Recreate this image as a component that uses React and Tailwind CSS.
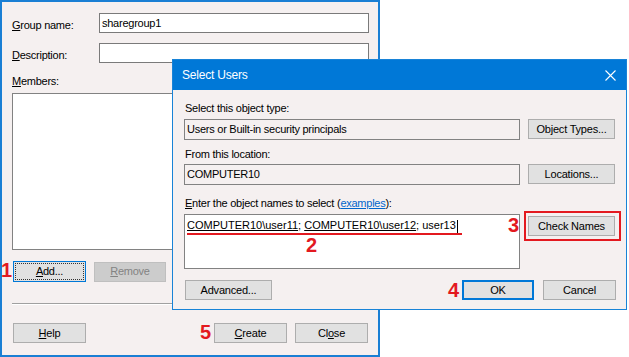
import React from "react";

const font = { fontFamily: '"Liberation Sans", Arial, sans-serif' };

function Btn({ children, className = "" }) {
  return (
    <div
      className={
        "flex items-center justify-center bg-[#e1e1e1] border border-[#adadad] text-black text-[11px] tracking-[-0.2px] leading-none " +
        className
      }
    >
      {children}
    </div>
  );
}

function Red({ children, className }) {
  return (
    <div
      className={
        "absolute text-[20px] font-bold leading-none text-[#e3191f] " + className
      }
    >
      {children}
    </div>
  );
}

export default function App() {
  return (
    <div
      className="relative w-[629px] h-[357px] bg-white overflow-hidden text-[11px] tracking-[-0.25px] text-black"
      style={font}
    >
      {/* Background window: New Group */}
      <div className="w-[380px] h-[357px] border-2 border-[#1a7fd4] bg-[#f5f0f0] pl-[10px] flex flex-col">
        <div className="mt-[11px] flex items-center h-[20px]">
          <div className="w-[87px] leading-[14px] pt-[3px]">
            <span className="underline">G</span>roup name:
          </div>
          <div className="w-[270px] h-[20px] border border-[#7a7a7a] bg-white pl-[2px] flex items-center">
            sharegroup1
          </div>
        </div>
        <div className="mt-[10px] flex items-center h-[20px]">
          <div className="w-[87px] leading-[14px] pt-[3px]">
            <span className="underline">D</span>escription:
          </div>
          <div className="w-[270px] h-[20px] border border-[#7a7a7a] bg-white" />
        </div>
        <div className="mt-[11px] leading-[14px]">
          <span className="underline">M</span>embers:
        </div>
        <div className="mt-[5px] w-[357px] h-[157px] border border-[#828282] bg-white" />
        <div className="mt-[11px] flex items-center h-[21px]">
          <div className="ml-[1px] w-[73px] h-[21px] border border-[#0078d7] bg-[#e1e1e1] p-[1px]">
            <div className="w-full h-full border border-dotted border-[#333] flex items-center justify-center leading-none">
              <span>
                <span className="underline">A</span>dd...
              </span>
            </div>
          </div>
          <div className="ml-[8px] w-[72px] h-[20px] bg-[#cccccc] border border-[#bfbfbf] text-[#838383] flex items-center justify-center leading-none">
            <span>
              <span className="underline">R</span>emove
            </span>
          </div>
        </div>
        <div className="mt-[21px] w-[357px] h-[2px] border-t border-[#a0a0a0] border-b border-b-white" />
        <div className="mt-[18px] flex items-center h-[20px]">
          <Btn className="ml-[1px] w-[73px] h-[20px]">
            <span>
              <span className="underline">H</span>elp
            </span>
          </Btn>
          <Btn className="ml-[128px] w-[73px] h-[20px]">
            <span>
              <span className="underline">C</span>reate
            </span>
          </Btn>
          <Btn className="ml-[8px] w-[73px] h-[20px]">
            <span>
              Cl<span className="underline">o</span>se
            </span>
          </Btn>
        </div>
      </div>

      {/* Select Users dialog */}
      <div className="absolute left-[172px] top-[59px] w-[455px] h-[251px] border border-[#1883d7] bg-[#f5f0f0] flex flex-col">
        <div className="h-[30px] bg-[#0078d7] flex items-center justify-between pl-[9px] pr-[9px] text-white">
          <span className="text-[12px] tracking-[-0.2px]">Select Users</span>
          <svg width="11" height="11" viewBox="0 0 11 11" className="mr-[1px]">
            <path d="M0.5 0.5 L10.5 10.5 M10.5 0.5 L0.5 10.5" stroke="white" strokeWidth="1.1" fill="none" />
          </svg>
        </div>
        <div className="pl-[11px] flex flex-col">
          <div className="mt-[11px] pl-[1px] leading-[14px]">Select this object type:</div>
          <div className="mt-[4px] flex items-start">
            <div className="w-[336px] h-[21px] border border-[#828282] pl-[2px] flex items-center">
              Users or Built-in security principals
            </div>
            <Btn className="ml-[8px] w-[87px] h-[20px]">Object Types...</Btn>
          </div>
          <div className="mt-[7px] pl-[1px] leading-[14px]">From this location:</div>
          <div className="mt-[3px] flex items-start">
            <div className="w-[336px] h-[21px] border border-[#828282] pl-[2px] flex items-center">
              COMPUTER10
            </div>
            <Btn className="ml-[8px] w-[87px] h-[20px]">Locations...</Btn>
          </div>
          <div className="mt-[11px] pl-[1px] leading-[14px]">
            <span className="underline">E</span>nter the object names to select (
            <span className="text-[#0066cc] underline">examples</span>):
          </div>
          <div className="mt-[4px] flex items-start">
            <div className="w-[336px] h-[55px] border border-[#828282] bg-white pl-[2px] pt-[3px] leading-[14px] tracking-normal">
              <span className="underline">COMPUTER10\user11</span>;{" "}
              <span className="underline">COMPUTER10\user12</span>; user13
              <span className="inline-block w-[1px] h-[13px] bg-black align-middle ml-[1px]" />
            </div>
            <Btn className="ml-[8px] mt-[2px] w-[87px] h-[20px]">Check Names</Btn>
          </div>
          <div className="mt-[11px] flex items-center h-[20px]">
            <Btn className="ml-[1px] w-[87px] h-[20px]">Advanced...</Btn>
            <div className="ml-[190px] w-[72px] h-[20px] border-2 border-[#0078d7] bg-[#e1e1e1] flex items-center justify-center leading-none">
              OK
            </div>
            <Btn className="ml-[9px] w-[73px] h-[20px]">Cancel</Btn>
          </div>
        </div>
      </div>

      {/* Annotations */}
      <div className="absolute left-[187px] top-[233px] w-[275px] h-[2px] bg-[#e3191f]" />
      <div className="absolute left-[524px] top-[211px] w-[97px] h-[30px] border-2 border-[#e3191f]" />
      <Red className="left-[1px] top-[260px]">1</Red>
      <Red className="left-[306px] top-[235px]">2</Red>
      <Red className="left-[508px] top-[215px]">3</Red>
      <Red className="left-[448px] top-[280px]">4</Red>
      <Red className="left-[200px] top-[322px]">5</Red>
    </div>
  );
}
